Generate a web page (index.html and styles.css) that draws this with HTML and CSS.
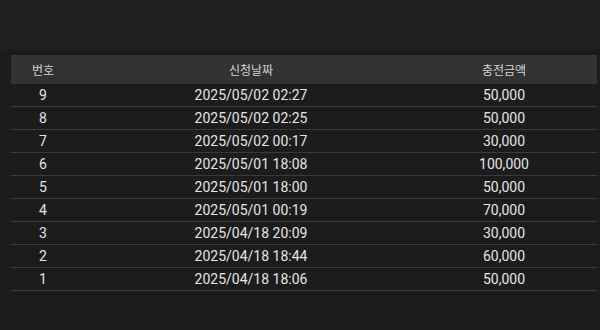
FILE: index.html
```html
<!DOCTYPE html>
<html lang="ko">
<head>
<meta charset="utf-8">
<link rel="stylesheet" href="styles.css">
</head>
<body>
<div class="top"></div>
<div class="band"></div>
<div class="wrap">
  <table class="list">
    <colgroup>
      <col class="c-no"><col class="c-date"><col class="c-amt"><col class="c-pad">
    </colgroup>
    <thead>
      <tr><th>번호</th><th>신청날짜</th><th>충전금액</th><th></th></tr>
    </thead>
    <tbody>
      <tr><td>9</td><td>2025/05/02 02:27</td><td>50,000</td><td></td></tr>
      <tr><td>8</td><td>2025/05/02 02:25</td><td>50,000</td><td></td></tr>
      <tr><td>7</td><td>2025/05/02 00:17</td><td>30,000</td><td></td></tr>
      <tr><td>6</td><td>2025/05/01 18:08</td><td>100,000</td><td></td></tr>
      <tr><td>5</td><td>2025/05/01 18:00</td><td>50,000</td><td></td></tr>
      <tr><td>4</td><td>2025/05/01 00:19</td><td>70,000</td><td></td></tr>
      <tr><td>3</td><td>2025/04/18 20:09</td><td>30,000</td><td></td></tr>
      <tr><td>2</td><td>2025/04/18 18:44</td><td>60,000</td><td></td></tr>
      <tr><td>1</td><td>2025/04/18 18:06</td><td>50,000</td><td></td></tr>
    </tbody>
  </table>
</div>
</body>
</html>
```
FILE: styles.css
```css
html, body {
  margin: 0;
  padding: 0;
  background: #1c1c1c;
  width: 600px;
  height: 330px;
  overflow: hidden;
}
.top {
  height: 51px;
  background: #1e1e1e;
}
.band {
  height: 4px;
  background: #1a1a1a;
}
.wrap {
  padding: 0 3px 0 11px;
}
.list {
  width: 586px;
  border-collapse: collapse;
  table-layout: fixed;
  font-family: Roboto, "Noto Sans CJK KR", sans-serif;
  color: #e4e4e4;
}
.c-no { width: 64px; }
.c-date { width: 352px; }
.c-amt { width: 154px; }
.c-pad { width: 16px; }
.list th {
  background: #323232;
  height: 29px;
  padding: 0;
  font-size: 12px;
  font-weight: 400;
  color: #d2d2d2;
  text-align: center;
  vertical-align: middle;
}
.list td {
  height: 22px;
  padding: 0;
  font-size: 14px;
  text-align: center;
  vertical-align: middle;
  border-bottom: 1px solid #3a3a3a;
  line-height: 22px;
}
```
